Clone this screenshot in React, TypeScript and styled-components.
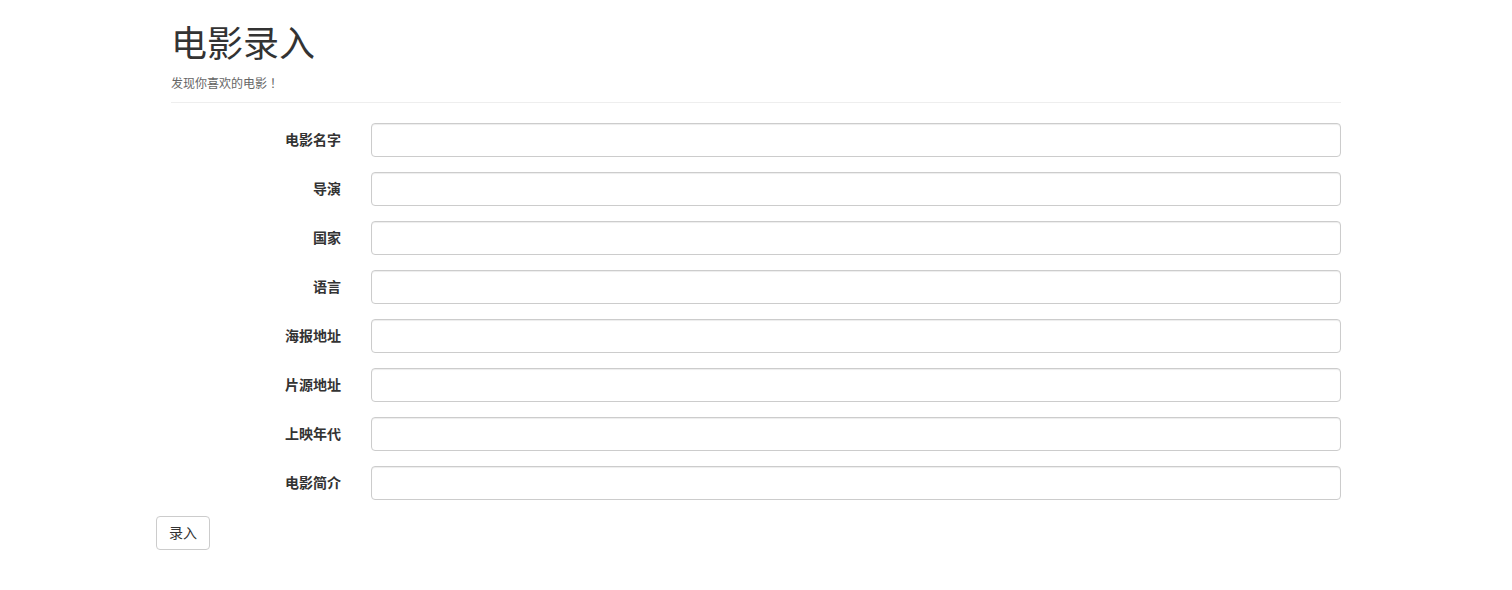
import React from "react";
import styled, { createGlobalStyle } from "styled-components";

const fields = ["电影名字", "导演", "国家", "语言", "海报地址", "片源地址", "上映年代", "电影简介"];

const GlobalStyle = createGlobalStyle`
  * {
    box-sizing: border-box;
  }

  body {
    margin: 0;
    background: #fff;
    color: #333;
    font-family: "Liberation Sans", "Noto Sans CJK SC", sans-serif;
    font-size: 14px;
    line-height: 1.42857;
  }
`;

export default function App() {
  return (
    <>
      <GlobalStyle />
      <Page>
        <Header>
          <Title>电影录入</Title>
          <Subtitle>
            发现你喜欢的电影<Bang>！</Bang>
          </Subtitle>
        </Header>

        <Form onSubmit={(e) => e.preventDefault()}>
          {fields.map((name) => (
            <FormGroup key={name}>
              <LabelCol>
                <Label>{name}</Label>
              </LabelCol>
              <InputCol>
                <Input type="text" />
              </InputCol>
            </FormGroup>
          ))}
          <SubmitButton type="submit">录入</SubmitButton>
        </Form>
      </Page>
    </>
  );
}

const Page = styled.div`
  width: 1200px;
  margin: 0 auto;
`;

const Header = styled.div`
  margin: 22px 15px 20px;
  padding-bottom: 9px;

  border-bottom: 1px solid #eee;
`;

const Title = styled.h1`
  margin: 0 0 11px;

  color: #333;
  font-family: "Noto Sans CJK SC", "Liberation Sans", sans-serif;
  font-size: 36px;
  font-weight: 400;
  line-height: 39.6px;
`;

const Subtitle = styled.p`
  margin: 0;

  color: #666;
  font-family: "Noto Sans CJK SC", "Liberation Sans", sans-serif;
  font-size: 12px;
  line-height: 20px;
`;

const Bang = styled.span`
  font-family: "Noto Sans CJK TC", "Noto Sans CJK SC", sans-serif;
`;

const Form = styled.form`
  display: flex;
  flex-direction: column;
`;

const FormGroup = styled.div`
  display: flex;

  margin-bottom: 15px;
`;

const LabelCol = styled.div`
  width: 200px;
  padding: 8px 15px 0;

  text-align: right;
`;

const Label = styled.label`
  color: #333;
  font-weight: 700;
`;

const InputCol = styled.div`
  flex: 1;
  padding: 0 15px;
`;

const Input = styled.input`
  display: block;

  width: 100%;
  height: 34px;
  padding: 6px 12px;

  color: #555;
  font-family: inherit;
  font-size: 14px;

  background-color: #fff;
  border: 1px solid #ccc;
  border-radius: 4px;
  box-shadow: inset 0 1px 1px rgba(0, 0, 0, 0.075);
  outline: none;
`;

const SubmitButton = styled.button`
  align-self: flex-start;

  height: 34px;
  margin-top: 1px;
  padding: 6px 12px;

  color: #333;
  font-family: inherit;
  font-size: 14px;
  line-height: 20px;

  background-color: #fff;
  border: 1px solid #ccc;
  border-radius: 4px;
  cursor: pointer;
`;
